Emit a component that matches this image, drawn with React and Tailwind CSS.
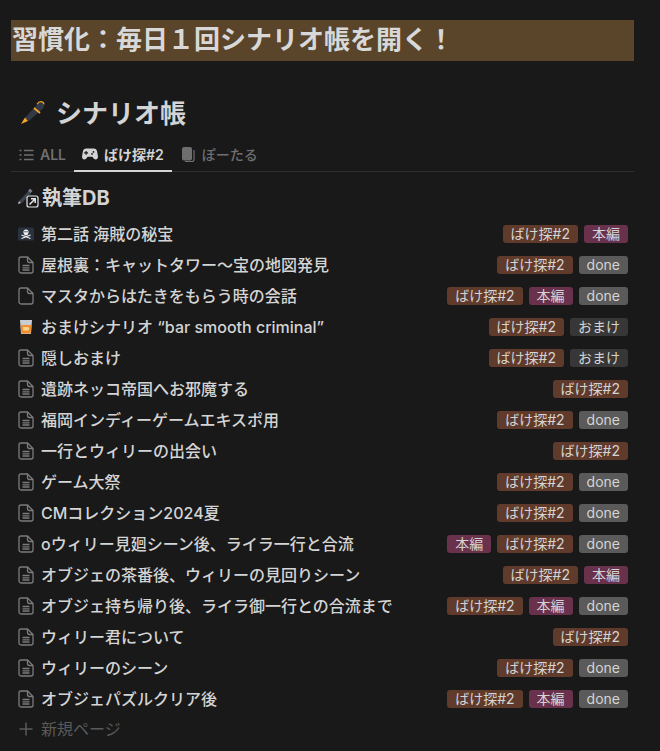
const FONT = "font-['Inter','Noto_Sans_CJK_JP',sans-serif]";

const tagColors = {
  bake: 'bg-[#603b2c]',
  honpen: 'bg-[#69314c]',
  done: 'bg-[#5a5a5a]',
  omake: 'bg-[#373737]',
};

const tagLabels = {
  bake: 'ばけ探#2',
  honpen: '本編',
  done: 'done',
  omake: 'おまけ',
};

const rows = [
  { icon: 'skull', title: '第二話 海賊の秘宝', tags: ['bake', 'honpen'] },
  { icon: 'lines', title: '屋根裏：キャットタワー～宝の地図発見', tags: ['bake', 'done'] },
  { icon: 'blank', title: 'マスタからはたきをもらう時の会話', tags: ['bake', 'honpen', 'done'] },
  { icon: 'glass', title: 'おまけシナリオ “bar smooth criminal”', tags: ['bake', 'omake'] },
  { icon: 'lines', title: '隠しおまけ', tags: ['bake', 'omake'] },
  { icon: 'lines', title: '遺跡ネッコ帝国へお邪魔する', tags: ['bake'] },
  { icon: 'lines', title: '福岡インディーゲームエキスポ用', tags: ['bake', 'done'] },
  { icon: 'lines', title: '一行とウィリーの出会い', tags: ['bake'] },
  { icon: 'lines', title: 'ゲーム大祭', tags: ['bake', 'done'] },
  { icon: 'lines', title: 'CMコレクション2024夏', tags: ['bake', 'done'] },
  { icon: 'lines', title: 'oウィリー見廻シーン後、ライラ一行と合流', tags: ['honpen', 'bake', 'done'] },
  { icon: 'lines', title: 'オブジェの茶番後、ウィリーの見回りシーン', tags: ['bake', 'honpen'] },
  { icon: 'lines', title: 'オブジェ持ち帰り後、ライラ御一行との合流まで', tags: ['bake', 'honpen', 'done'] },
  { icon: 'lines', title: 'ウィリー君について', tags: ['bake'] },
  { icon: 'lines', title: 'ウィリーのシーン', tags: ['bake', 'done'] },
  { icon: 'lines', title: 'オブジェパズルクリア後', tags: ['bake', 'honpen', 'done'] },
];

const DocIcon = ({ lines }) => (
  <svg width="16" height="18" viewBox="0 0 16 18" fill="none" stroke="#7b7b7b" strokeWidth="1.3">
    <path d="M3 1h6.5L15 6.5V15a2 2 0 0 1-2 2H3a2 2 0 0 1-2-2V3a2 2 0 0 1 2-2z" />
    <path d="M9.5 1v3.5a2 2 0 0 0 2 2H15" />
    {lines && <path d="M4.5 9.5h7M4.5 11.8h7M4.5 14h7" />}
  </svg>
);

const SkullIcon = () => (
  <svg width="16" height="14" viewBox="0 0 16 14">
    <rect width="16" height="13" x="0" y="0.5" rx="1.5" fill="#2a3240" />
    <circle cx="8" cy="5" r="2.6" fill="#f2f2f2" />
    <rect x="6.5" y="6.5" width="3" height="1.8" fill="#f2f2f2" />
    <circle cx="7" cy="4.8" r="0.7" fill="#2a3240" />
    <circle cx="9" cy="4.8" r="0.7" fill="#2a3240" />
    <path d="M3.5 8l9 3.5M12.5 8l-9 3.5" stroke="#f2f2f2" strokeWidth="1.1" />
  </svg>
);

const GlassIcon = () => (
  <svg width="14" height="16" viewBox="0 0 14 16">
    <path d="M1 1h12l-1 14H2z" fill="#c9ccd0" />
    <path d="M1.6 6h10.8l-.7 8.5H2.3z" fill="#ef8f2f" />
    <rect x="4" y="8" width="6" height="3.5" rx="0.8" fill="#fbd28a" />
  </svg>
);

const PenIcon = () => (
  <svg width="28" height="28" viewBox="0 0 28 28">
    <path d="M6 18.5L17.5 6.5l4.5 4.5L10 22z" fill="#333a45" />
    <path d="M16.8 7.5c1-2 2.6-3.6 5-4 1.6-.2 3 .6 3.4 1.8.3 2.2-1 4.2-3.4 6.2z" fill="#333a45" />
    <path d="M18 5.2c1-1.6 3-2.8 5-2.4 1.3.3 2 1.2 2 2.4" fill="none" stroke="#f4a62a" strokeWidth="1.2" />
    <path d="M15 9l6 5" stroke="#f4a62a" strokeWidth="1.8" />
    <path d="M6 18.5L2 25l7-3z" fill="#f4a62a" />
  </svg>
);

const ListIcon = () => (
  <svg width="15" height="12" viewBox="0 0 15 12" fill="none" stroke="#6f6f6f" strokeWidth="1.4">
    <path d="M5 1.5h9.5M5 6h9.5M5 10.5h9.5M0.5 1.5h2M0.5 6h2M0.5 10.5h2" />
  </svg>
);

const GamepadIcon = () => (
  <svg width="16" height="12" viewBox="0 0 16 12">
    <path
      fillRule="evenodd"
      fill="#d4d4d4"
      d="M4.2 0.5h7.6c1.8 0 2.9 1.1 3.3 3l.8 4.6c.3 1.9-.7 3.4-2.2 3.4-1.1 0-1.9-.7-2.6-1.7l-.7-1H5.6l-.7 1C4.2 10.800 3.400 11.500 2.300 11.500 0.800 11.500-.2 10 .1 8.100l.8-4.600c.4-1.900 1.500-3 3.300-3zM3.500 3v1.300H2.200v1.200h1.300v1.300h1.200V5.500H6V4.300H4.700V3zM11.500 3a.9.9 0 1 0 0 1.800.9.9 0 0 0 0-1.800zM10 5a.9.9 0 1 0 0 1.800A.9.9 0 0 0 10 5z"
    />
  </svg>
);

const PagesIcon = () => (
  <svg width="14" height="15" viewBox="0 0 14 15">
    <path d="M1 2a2 2 0 0 1 2-2h6a2 2 0 0 1 2 2v9.500a2 2 0 0 1-2 2H3a2 2 0 0 1-2-2z" fill="#6f6f6f" />
    <path d="M13 3v9.500a2 2 0 0 1-2 2H4" fill="none" stroke="#6f6f6f" strokeWidth="1.200" />
  </svg>
);

const DbIcon = () => (
  <svg width="23" height="22" viewBox="0 0 23 22">
    <path d="M2 14L11.500 4l2.500 2.500L5 16z" fill="#3c4450" />
    <path d="M11 4l2-2.500 2.500 2.500L13.500 6z" fill="#79808a" />
    <path d="M2 14l-1 3 3-1z" fill="#c8c8c8" />
    <rect x="10" y="9" width="11" height="11" rx="2" fill="#191919" stroke="#e6e6e6" strokeWidth="1.200" />
    <path d="M12.500 17.500l5.500-5.500M14 11.800h4.200V16" fill="none" stroke="#e6e6e6" strokeWidth="1.500" />
  </svg>
);

const RowIcon = ({ type }) => {
  if (type === 'skull') return <SkullIcon />;
  if (type === 'glass') return <GlassIcon />;
  return <DocIcon lines={type === 'lines'} />;
};

const Row = ({ icon, title, tags }) => (
  <div className="flex h-[31px] items-center justify-between pl-[7px] pr-[6px]">
    <div className="flex items-center">
      <span className="flex w-[16px] justify-center">
        <RowIcon type={icon} />
      </span>
      <span className="ml-[7px] text-[16px] font-medium text-[#d4d4d4]">{title}</span>
    </div>
    <div className="flex gap-[6px]">
      {tags.map((tag) => (
        <span
          key={tag}
          className={`flex h-[18px] items-center rounded-[3px] px-[8px] text-[14px] text-[#d4d4d4] ${tagColors[tag]}`}
        >
          {tagLabels[tag]}
        </span>
      ))}
    </div>
  </div>
);

const App = () => {
  return (
    <div className={`h-[751px] w-[660px] overflow-hidden bg-[#191919] pl-[11px] pr-[26px] pt-[20px] ${FONT}`}>
      <h2 className="h-[41px] bg-[#5a452b] pl-px text-[26px] leading-[40px] font-bold text-[#d8d8d8]">
        習慣化：毎日１回シナリオ帳を開く！
      </h2>

      <h1 className="mt-[32px] flex h-[40px] items-center pl-[8px] text-[26px] font-bold text-[#d4d4d4]">
        <PenIcon />
        <span className="ml-[9px]">シナリオ帳</span>
      </h1>

      <div className="mt-[5px] flex h-[34px] border-b border-[#2f2f2f] text-[14px] font-medium">
        <div className="flex items-center px-[8px] text-[#6f6f6f]">
          <ListIcon />
          <span className="ml-[6px] font-semibold">ALL</span>
        </div>
        <div className="-mb-px flex items-center border-b-2 border-[#d4d4d4] px-[8px] text-[#d4d4d4]">
          <GamepadIcon />
          <span className="ml-[6px] font-semibold">ばけ探#2</span>
        </div>
        <div className="flex items-center px-[9px] text-[#6f6f6f]">
          <PagesIcon />
          <span className="ml-[7px]">ぽーたる</span>
        </div>
      </div>

      <div className="mt-[10px] flex h-[32px] items-center pl-[6px] text-[20px] font-bold text-[#d4d4d4]">
        <DbIcon />
        <span className="ml-[2px]">執筆DB</span>
      </div>

      <div className="mt-[4px]">
        {rows.map((row) => (
          <Row key={row.title} {...row} />
        ))}
      </div>

      <div className="flex h-[30px] items-center pl-[7px] text-[16px] text-[#5a5a5a]">
        <svg width="16" height="16" viewBox="0 0 16 16" stroke="#5a5a5a" strokeWidth="1.500">
          <path d="M8 1.500v13M1.500 8h13" />
        </svg>
        <span className="ml-[7px]">新規ページ</span>
      </div>
    </div>
  );
};

export default App;
